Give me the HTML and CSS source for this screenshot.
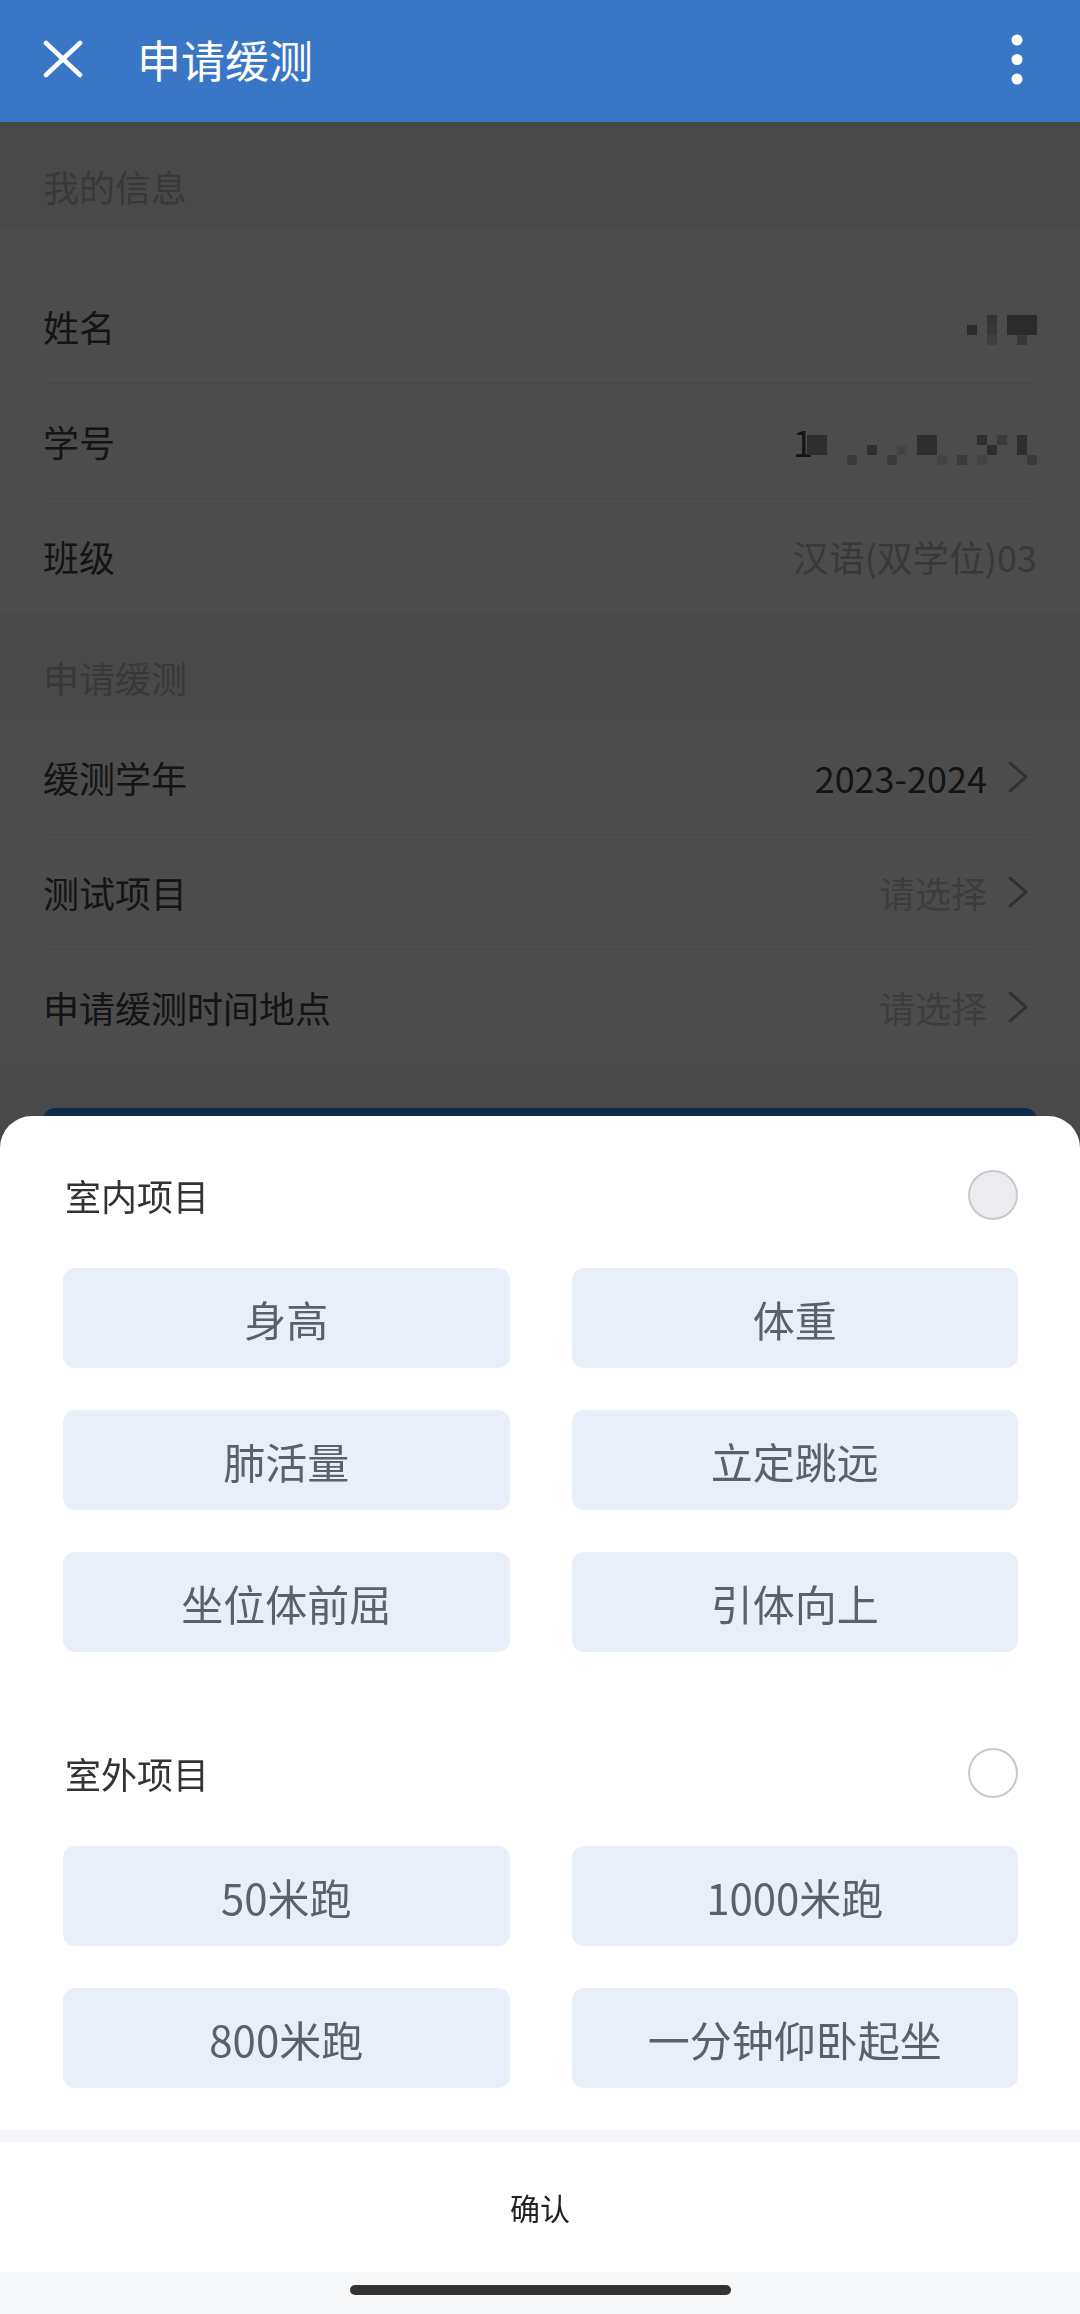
FILE: index.html
```html
<!DOCTYPE html>
<html lang="zh-CN">
<head>
    <meta charset="UTF-8">
    <meta name="viewport" content="width=device-width, initial-scale=1.0">
    <title>申请缓测</title>
    <link rel="stylesheet" href="styles.css">
</head>
<body>
    <header class="topbar">
        <svg class="icon-close" viewBox="0 0 40 38">
            <path d="M3 3 L37 35 M37 3 L3 35" stroke="#fff" stroke-width="4.5" stroke-linecap="round" fill="none"/>
        </svg>
        <h1 class="title">申请缓测</h1>
        <svg class="icon-more" viewBox="0 0 12 51">
            <circle cx="6" cy="6" r="5.5" fill="#fff"/>
            <circle cx="6" cy="25.5" r="5.5" fill="#fff"/>
            <circle cx="6" cy="45" r="5.5" fill="#fff"/>
        </svg>
    </header>

    <main class="page">
        <div class="group-title">我的信息</div>
        <div class="card card-info">
            <div class="row">
                <span class="label">姓名</span>
                <span class="mosaic mosaic-name"></span>
            </div>
            <div class="row">
                <span class="label">学号</span>
                <span class="value-id">1<span class="mosaic mosaic-id"></span></span>
            </div>
            <div class="row">
                <span class="label">班级</span>
                <span class="value">汉语(双学位)03</span>
            </div>
        </div>

        <div class="group-title">申请缓测</div>
        <div class="card">
            <div class="row">
                <span class="label">缓测学年</span>
                <span class="value picked">2023-2024<svg class="chevron" viewBox="0 0 20 32"><path d="M2 2 L18 16 L2 30" stroke="#a6a6a6" stroke-width="3" fill="none" stroke-linecap="round" stroke-linejoin="round"/></svg></span>
            </div>
            <div class="row">
                <span class="label">测试项目</span>
                <span class="value empty">请选择<svg class="chevron" viewBox="0 0 20 32"><path d="M2 2 L18 16 L2 30" stroke="#a6a6a6" stroke-width="3" fill="none" stroke-linecap="round" stroke-linejoin="round"/></svg></span>
            </div>
            <div class="row">
                <span class="label">申请缓测时间地点</span>
                <span class="value empty">请选择<svg class="chevron" viewBox="0 0 20 32"><path d="M2 2 L18 16 L2 30" stroke="#a6a6a6" stroke-width="3" fill="none" stroke-linecap="round" stroke-linejoin="round"/></svg></span>
            </div>
        </div>

        <div class="submit">提交</div>
    </main>

    <div class="mask"></div>

    <div class="sheet">
        <section class="pick-group">
            <div class="pick-head">
                <span class="pick-name">室内项目</span>
                <span class="radio off"></span>
            </div>
            <div class="pick-grid">
                <div class="pick-item">身高</div>
                <div class="pick-item">体重</div>
                <div class="pick-item">肺活量</div>
                <div class="pick-item">立定跳远</div>
                <div class="pick-item">坐位体前屈</div>
                <div class="pick-item">引体向上</div>
            </div>
        </section>
        <section class="pick-group">
            <div class="pick-head">
                <span class="pick-name">室外项目</span>
                <span class="radio"></span>
            </div>
            <div class="pick-grid">
                <div class="pick-item">50米跑</div>
                <div class="pick-item">1000米跑</div>
                <div class="pick-item">800米跑</div>
                <div class="pick-item">一分钟仰卧起坐</div>
            </div>
        </section>
        <div class="sheet-gap"></div>
        <div class="sheet-foot">确认</div>
        <div class="home-bar"><span></span></div>
    </div>
</body>
</html>
```

FILE: styles.css
```css
body {
    margin: 0;
    background: #f5f6f8;
    font-family: "Noto Sans CJK SC", "Noto Sans", sans-serif;
    color: #444;
}

/* Top bar */
.topbar {
    height: 122px;
    box-sizing: border-box;
    padding: 0 57px 4px 43px;
    background: #3a76c6;
    display: flex;
    align-items: center;
}

.icon-close {
    width: 40px;
    height: 38px;
    margin-right: 54px;
}

.title {
    flex: 1;
    margin: 0;
    font-size: 44px;
    line-height: 1;
    font-weight: 400;
    color: #fff;
}

.icon-more {
    width: 12px;
    height: 51px;
}

/* Page under the mask */
.group-title {
    padding: 43px 43px 21px;
    font-size: 36px;
    line-height: 42px;
    color: #bbb;
}

.card {
    background: #fff;
}

.card-info {
    padding-top: 40px;
}

.row {
    height: 115px;
    box-sizing: border-box;
    margin: 0 43px;
    border-top: 1px solid #eee;
    display: flex;
    align-items: center;
    justify-content: space-between;
    font-size: 36px;
}

.row:first-child {
    border-top: none;
}

.label {
    color: #444;
}

.value {
    color: #bbb;
    display: flex;
    align-items: center;
}

.value.picked {
    color: #444;
}

.value.empty {
    color: #c8c8c8;
}

.chevron {
    width: 20px;
    height: 32px;
    margin-left: 21px;
    margin-right: 9px;
}

.value-id {
    display: flex;
    align-items: center;
    color: #444;
}

.mosaic {
    display: inline-block;
    height: 30px;
}

.mosaic::before {
    content: "";
    display: block;
    width: 10px;
    height: 10px;
}

.mosaic-name {
    width: 70px;
    margin-top: 8px;
}

.mosaic-name::before {
    box-shadow:
        20px 0 #b0b0b0, 40px 0 #8f8f8f, 50px 0 #8f8f8f, 60px 0 #8f8f8f,
        0 10px #8f8f8f, 20px 10px #bdbdbd, 40px 10px #8f8f8f, 50px 10px #8f8f8f, 60px 10px #8f8f8f,
        20px 20px #d8d8d8, 50px 20px #bdbdbd;
}

.mosaic-id {
    width: 230px;
    margin-top: 18px;
    margin-left: -6px;
}

.mosaic-id::before {
    background: #9a9a9a;
    box-shadow:
        10px 0 #9a9a9a, 110px 0 #9a9a9a, 120px 0 #9a9a9a, 170px 0 #9a9a9a, 190px 0 #c4c4c4, 210px 0 #9a9a9a,
        0 10px #9a9a9a, 10px 10px #9a9a9a, 60px 10px #9a9a9a, 90px 10px #e2e2e2, 110px 10px #9a9a9a, 120px 10px #9a9a9a, 180px 10px #9a9a9a, 210px 10px #9a9a9a,
        40px 20px #c4c4c4, 80px 20px #c4c4c4, 130px 20px #e2e2e2, 150px 20px #c4c4c4, 170px 20px #e2e2e2, 220px 20px #c4c4c4;
}

.submit {
    margin: 44px 43px 0;
    height: 100px;
    border-radius: 12px;
    background: #2f8ff8;
    color: #fff;
    font-size: 36px;
    display: flex;
    align-items: center;
    justify-content: center;
}

.mask {
    position: fixed;
    top: 122px;
    left: 0;
    right: 0;
    bottom: 0;
    background: rgba(0, 0, 0, 0.7);
}

/* Bottom sheet */
.sheet {
    position: fixed;
    left: 0;
    right: 0;
    bottom: 0;
    background: #fff;
    border-radius: 32px 32px 0 0;
    overflow: hidden;
}

.pick-group {
    padding: 54px 62px 42px 63px;
}

.pick-head {
    height: 50px;
    display: flex;
    align-items: center;
    justify-content: space-between;
}

.pick-name {
    padding-left: 2px;
    font-size: 36px;
    color: #333;
}

.radio {
    width: 50px;
    height: 50px;
    box-sizing: border-box;
    border-radius: 50%;
    border: 2px solid #c9c9cc;
    background: #fff;
}

.radio.off {
    background: #ebebf0;
}

.pick-grid {
    margin-top: 48px;
    display: grid;
    grid-template-columns: 1fr 1fr;
    column-gap: 62px;
    row-gap: 42px;
}

.pick-item {
    height: 100px;
    border-radius: 12px;
    background: #e9eff8;
    color: #5c6068;
    font-size: 42px;
    display: flex;
    align-items: center;
    justify-content: center;
}

.sheet-gap {
    height: 12px;
    background: #f3f5f8;
}

.sheet-foot {
    height: 130px;
    display: flex;
    align-items: center;
    justify-content: center;
    font-size: 30px;
    color: #222;
}

.home-bar {
    height: 42px;
    box-sizing: border-box;
    padding-top: 13px;
    background: #f7f8fa;
    display: flex;
    justify-content: center;
}

.home-bar span {
    width: 381px;
    height: 10px;
    border-radius: 5px;
    background: #333;
}
```
